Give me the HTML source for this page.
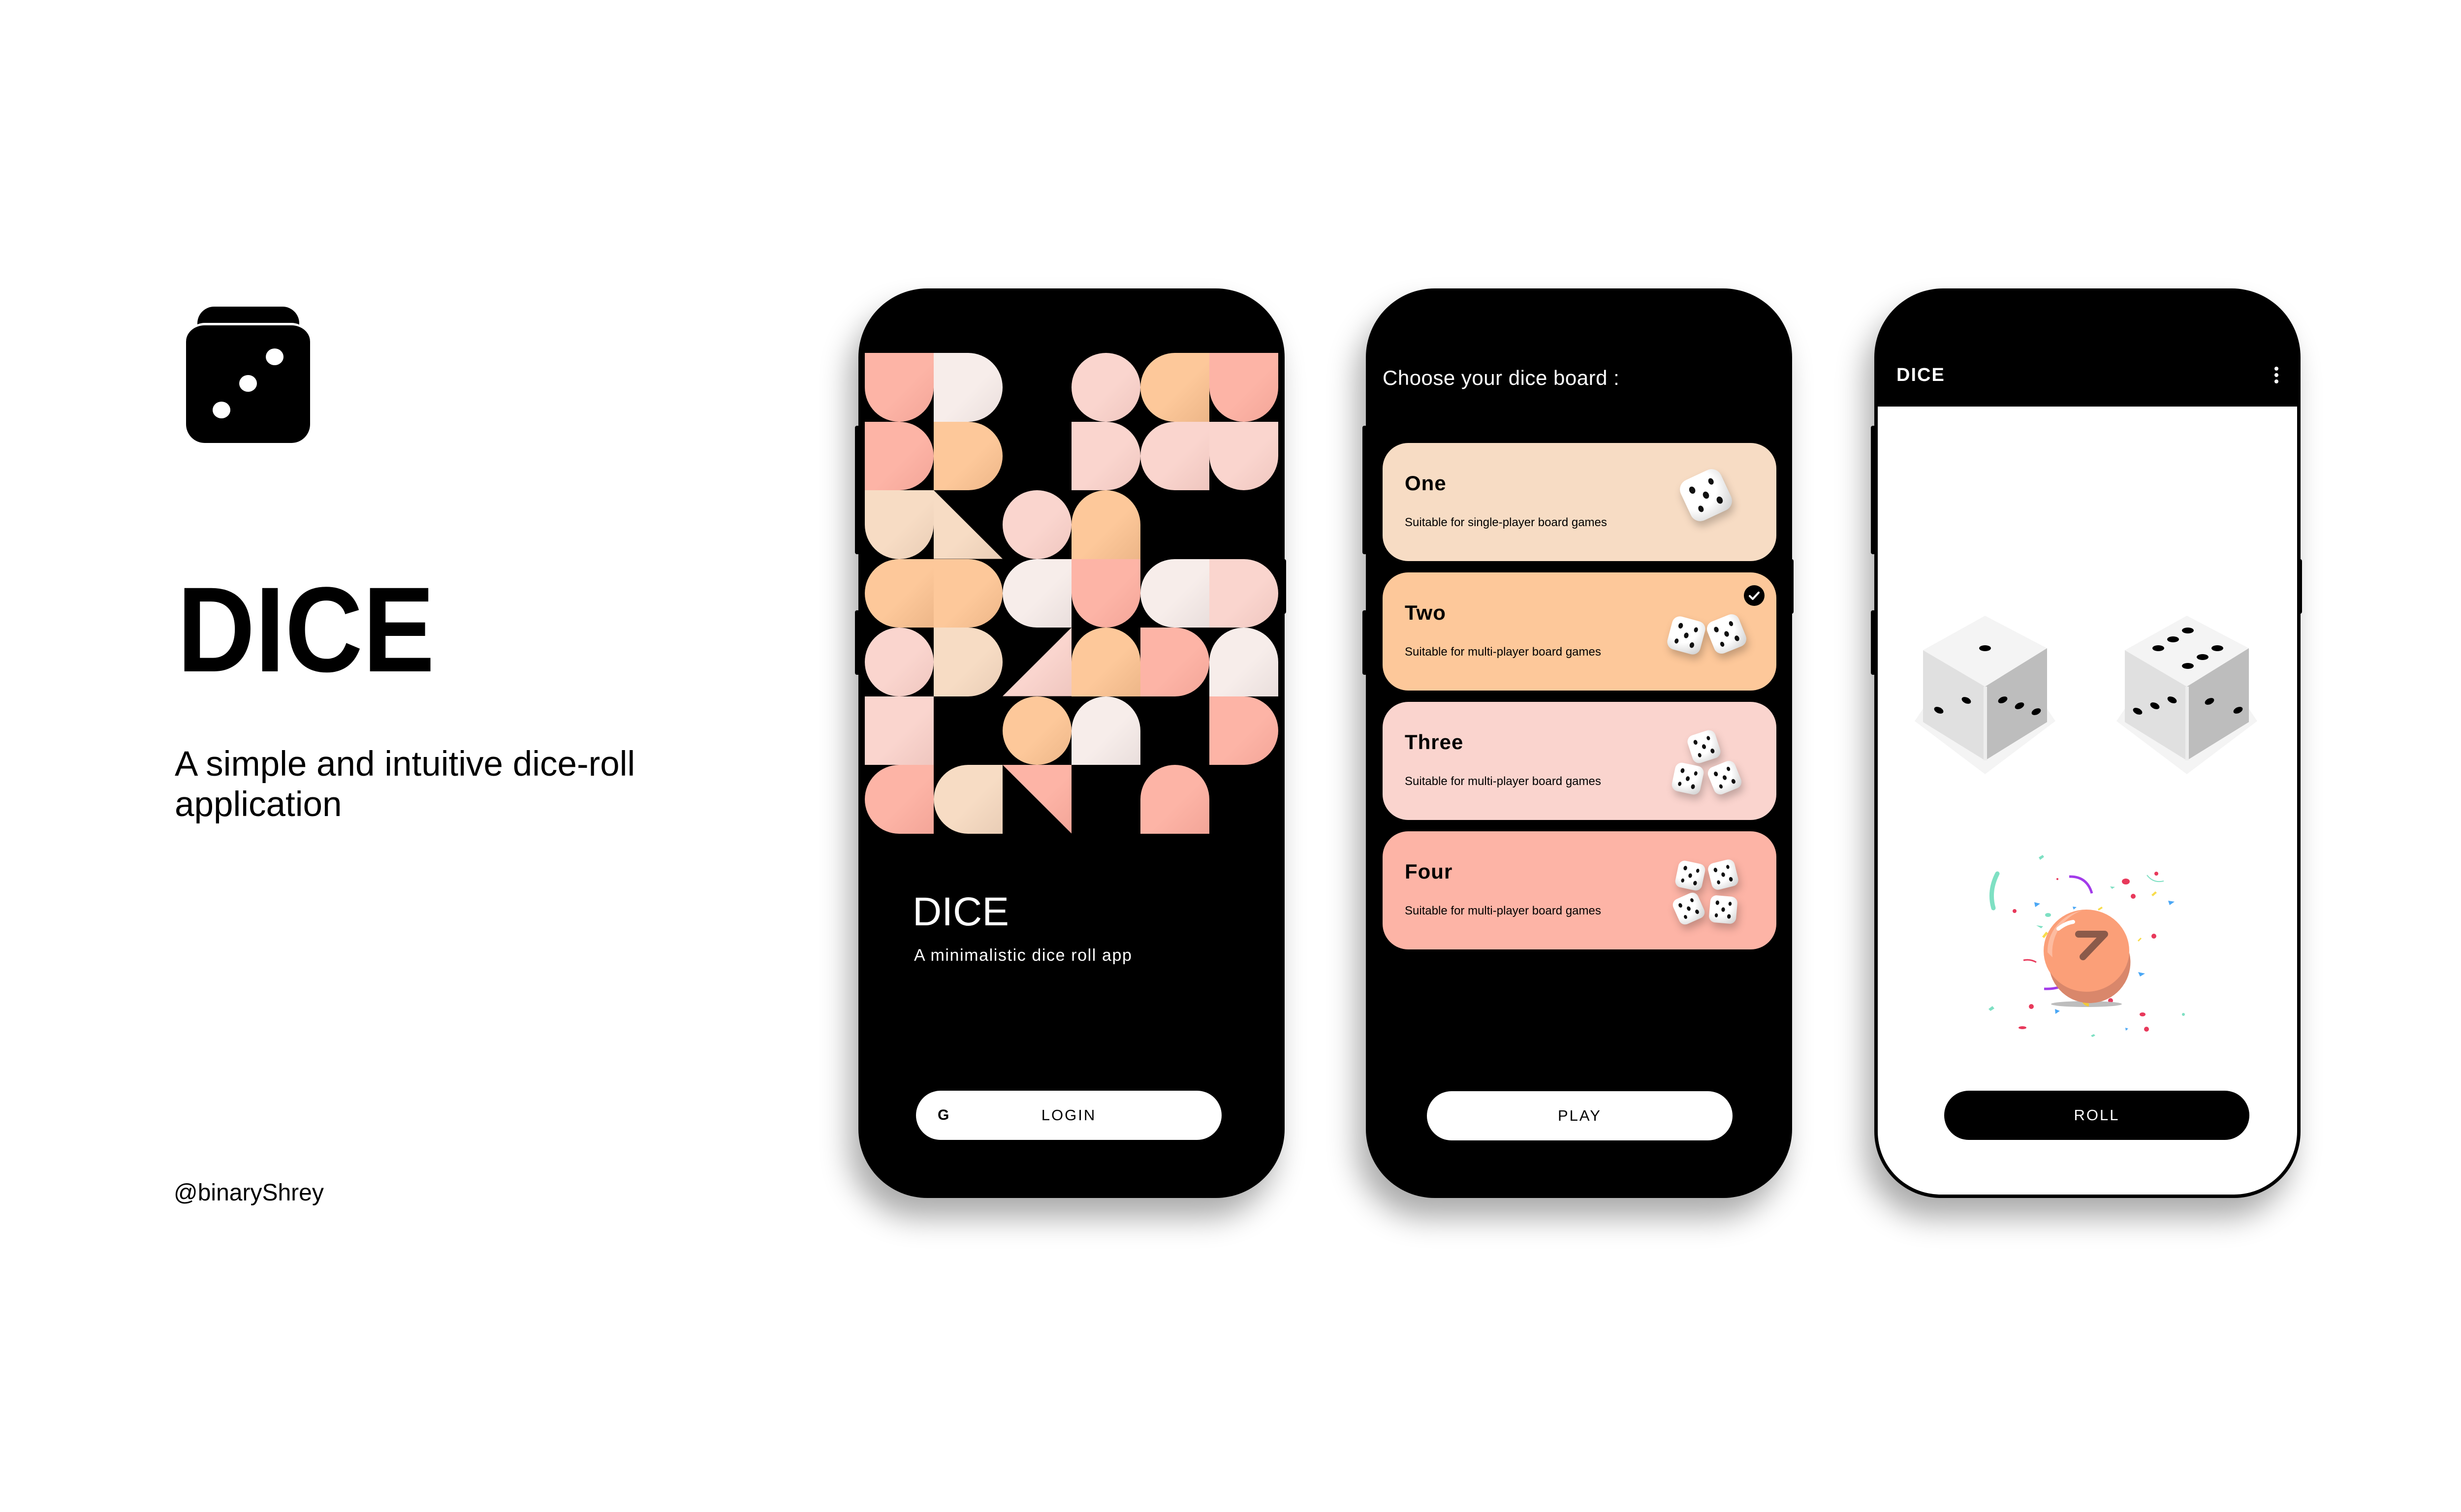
<!DOCTYPE html>
<html><head><meta charset="utf-8">
<style>
*{margin:0;padding:0;box-sizing:border-box}
body{width:5120px;height:3072px;background:#fff;position:relative;overflow:hidden;font-family:"Liberation Sans",sans-serif;color:#000}
.a{position:absolute}
.phone{position:absolute;top:586px;width:866px;height:1848px;background:#000;border-radius:140px;box-shadow:-18px 40px 60px rgba(0,0,0,0.33)}
.btn{position:absolute;background:#000;border-radius:4px;width:10px}
.grid div{position:absolute;width:140px;height:139.5px}
.S{background:linear-gradient(135deg,#FDB4A6 55%,#F3A598)}
.L{background:linear-gradient(135deg,#F7EDEA 55%,#E9DEDC)}
.P{background:linear-gradient(135deg,#FAD5CE 55%,#EFC6BF)}
.O{background:linear-gradient(135deg,#FDC89A 55%,#EDB688)}
.C{background:linear-gradient(135deg,#F7DCC4 55%,#E9CDB6)}
.ci{border-radius:50%}
.rb{border-radius:0 0 70px 70px}
.rt{border-radius:70px 70px 0 0}
.rl{border-radius:70px 0 0 70px}
.rr{border-radius:0 70px 70px 0}
.tA{clip-path:polygon(0 0,100% 100%,0 100%)}
.tB{clip-path:polygon(100% 0,100% 100%,0 100%)}
.tC{clip-path:polygon(0 0,100% 0,100% 100%)}
.card{position:absolute;left:34px;width:800px;height:240px;border-radius:52px}
.card h3{position:absolute;left:45px;top:58px;font-size:42px;font-weight:bold;letter-spacing:1px}
.card p{position:absolute;left:45px;top:148px;font-size:24px}
.pill{position:absolute;height:100px;border-radius:50px;text-align:center;line-height:100px;font-size:31px;letter-spacing:3px}
</style></head><body>

<!-- left branding -->
<div class="a" style="left:401px;top:623px;width:207px;height:40px;background:#000;border-radius:34px 34px 0 0"></div>
<div class="a" style="left:378px;top:656px;width:252px;height:244px;background:#000;border-radius:38px;border-top:5px solid #fff"></div>
<div class="a" style="left:540px;top:708px;width:36px;height:34px;border-radius:50%;background:#fff"></div>
<div class="a" style="left:486px;top:762px;width:36px;height:34px;border-radius:50%;background:#fff"></div>
<div class="a" style="left:432px;top:816px;width:36px;height:34px;border-radius:50%;background:#fff"></div>
<div class="a" style="left:360px;top:1150px;font-size:246px;font-weight:bold;line-height:260px;transform:scaleX(0.89);transform-origin:0 0">DICE</div>
<div class="a" style="left:355px;top:1512px;font-size:71px;line-height:82px">A simple and intuitive dice-roll<br>application</div>
<div class="a" style="left:353px;top:2396px;font-size:48px">@binaryShrey</div>

<!-- phone 1 -->
<div class="btn" style="left:1737px;top:865px;height:261px"></div>
<div class="btn" style="left:1737px;top:1240px;height:131px"></div>
<div class="btn" style="left:2603px;top:1136px;height:111px"></div>
<div class="phone" style="left:1744px">
  <div class="grid a" style="left:13px;top:131px">
    <div class="S rb" style="left:0;top:0"></div>
    <div class="L rr" style="left:140px;top:0"></div>
    <div class="P ci" style="left:420px;top:0"></div>
    <div class="O rl" style="left:560px;top:0"></div>
    <div class="S rb" style="left:700px;top:0"></div>

    <div class="S rr" style="left:0;top:139.5px"></div>
    <div class="O rr" style="left:140px;top:139.5px"></div>
    <div class="P rr" style="left:420px;top:139.5px"></div>
    <div class="P rl" style="left:560px;top:139.5px"></div>
    <div class="P rb" style="left:700px;top:139.5px"></div>

    <div class="C rb" style="left:0;top:279px"></div>
    <div class="C tA" style="left:140px;top:279px"></div>
    <div class="P ci" style="left:280px;top:279px"></div>
    <div class="O rt" style="left:420px;top:279px"></div>

    <div class="O rl" style="left:0;top:418.5px"></div>
    <div class="O rr" style="left:140px;top:418.5px"></div>
    <div class="L rl" style="left:280px;top:418.5px"></div>
    <div class="S rb" style="left:420px;top:418.5px"></div>
    <div class="L rl" style="left:560px;top:418.5px"></div>
    <div class="P rr" style="left:700px;top:418.5px"></div>

    <div class="P ci" style="left:0;top:558px"></div>
    <div class="C rr" style="left:140px;top:558px"></div>
    <div class="P tB" style="left:280px;top:558px"></div>
    <div class="O rt" style="left:420px;top:558px"></div>
    <div class="S rr" style="left:560px;top:558px"></div>
    <div class="L rt" style="left:700px;top:558px"></div>

    <div class="P" style="left:0;top:697.5px"></div>
    <div class="O ci" style="left:280px;top:697.5px"></div>
    <div class="L rt" style="left:420px;top:697.5px"></div>
    <div class="S rr" style="left:700px;top:697.5px"></div>

    <div class="S rl" style="left:0;top:837px"></div>
    <div class="C rl" style="left:140px;top:837px"></div>
    <div class="S tC" style="left:280px;top:837px"></div>
    <div class="S rt" style="left:560px;top:837px"></div>
  </div>
  <div class="a" style="left:110px;top:1222px;font-size:82px;color:#fff;line-height:90px">DICE</div>
  <div class="a" style="left:113px;top:1336px;font-size:34px;color:#fff;letter-spacing:1.6px">A minimalistic dice roll app</div>
  <div class="pill" style="left:117px;top:1630px;width:621px;background:#fff;color:#000">
    <span class="a" style="left:44px;top:0;font-weight:bold;font-size:30px;letter-spacing:0">G</span>LOGIN</div>
</div>

<svg width="0" height="0" style="position:absolute">
<defs>
<radialGradient id="dg" cx="0.35" cy="0.3" r="0.9"><stop offset="0.5" stop-color="#fff"/><stop offset="1" stop-color="#cfcfcf"/></radialGradient>
<g id="die">
<rect x="-30" y="-30" width="60" height="60" rx="14" fill="url(#dg)"/>
<ellipse cx="-14" cy="-14" rx="4" ry="5" fill="#111"/><ellipse cx="0" cy="0" rx="4" ry="5" fill="#111"/><ellipse cx="14" cy="14" rx="4" ry="5" fill="#111"/>
<ellipse cx="14" cy="-14" rx="3.5" ry="4.5" fill="#111"/><ellipse cx="-14" cy="14" rx="3.5" ry="4.5" fill="#111"/>
</g>
</defs>
</svg>

<!-- phone 2 -->
<div class="btn" style="left:2768px;top:865px;height:261px"></div>
<div class="btn" style="left:2768px;top:1240px;height:131px"></div>
<div class="btn" style="left:3634px;top:1136px;height:111px"></div>
<div class="phone" style="left:2775px">
  <div class="a" style="left:34px;top:158px;font-size:42px;color:#fff;letter-spacing:0.5px">Choose your dice board :</div>
  <div class="card" style="top:314px;background:#F7DCC4"><h3>One</h3><p>Suitable for single-player board games</p></div>
  <div class="card" style="top:577px;background:#FDC89A"><h3>Two</h3><p>Suitable for multi-player board games</p>
    <div class="a" style="left:734px;top:26px;width:42px;height:42px;border-radius:50%;background:#000"></div>
    <svg class="a" style="left:734px;top:26px" width="42" height="42"><path d="M12 22 L18 28 L30 15" stroke="#fff" stroke-width="4" fill="none" stroke-linecap="round" stroke-linejoin="round"/></svg>
  </div>
  <div class="card" style="top:840px;background:#FAD4CE"><h3>Three</h3><p>Suitable for multi-player board games</p></div>
  <div class="card" style="top:1103px;background:#FDB4A6"><h3>Four</h3><p>Suitable for multi-player board games</p></div>
  <div class="pill" style="left:124px;top:1631px;width:621px;background:#fff;color:#000">PLAY</div>
</div>
<svg class="a" style="left:0;top:0;filter:drop-shadow(4px 10px 8px rgba(0,0,0,0.22))" width="5120" height="3072">
<use href="#die" transform="translate(3466,1006) rotate(-25) scale(1.5)"/>
<use href="#die" transform="translate(3426,1291) rotate(15) scale(1.15)"/>
<use href="#die" transform="translate(3508,1288) rotate(-22) scale(1.15)"/>
<use href="#die" transform="translate(3462,1517) rotate(-18) scale(0.98)"/>
<use href="#die" transform="translate(3429,1582) rotate(12) scale(0.98)"/>
<use href="#die" transform="translate(3504,1580) rotate(-22) scale(0.98)"/>
<use href="#die" transform="translate(3434,1779) rotate(12) scale(0.92)"/>
<use href="#die" transform="translate(3501,1777) rotate(-14) scale(0.92)"/>
<use href="#die" transform="translate(3431,1846) rotate(-24) scale(0.92)"/>
<use href="#die" transform="translate(3501,1848) rotate(5) scale(0.92)"/>
</svg>

<!-- phone 3 -->
<div class="btn" style="left:3801px;top:865px;height:261px"></div>
<div class="btn" style="left:3801px;top:1240px;height:131px"></div>
<div class="btn" style="left:4667px;top:1136px;height:111px"></div>
<div class="phone" style="left:3808px;border-radius:140px 140px 135px 135px">
  <div class="a" style="left:45px;top:155px;font-size:38px;font-weight:bold;color:#fff;letter-spacing:2px">DICE</div>
  <div class="a" style="left:813px;top:159px;width:8px;height:8px;border-radius:50%;background:#fff"></div>
  <div class="a" style="left:813px;top:172px;width:8px;height:8px;border-radius:50%;background:#fff"></div>
  <div class="a" style="left:813px;top:185px;width:8px;height:8px;border-radius:50%;background:#fff"></div>
  <div class="a" style="left:7px;top:240px;width:852px;height:1601px;background:#fff;border-radius:0 0 128px 128px"></div>
  <div class="pill" style="left:142px;top:1630px;width:620px;background:#000;color:#fff">ROLL</div>
</div>
<svg class="a" style="left:0;top:0" width="5120" height="3072">
<defs>
<g id="box">
<path d="M10 225 L153 333 L296 225 L279 200 L153 290 L27 200 Z" fill="#F4F4F4"/>
<path d="M153 11 L27 81 L153 155 L279 77 Z" fill="#F4F4F4"/>
<path d="M27 81 L153 155 L153 305 L27 227 Z" fill="#E0E0E0"/>
<path d="M153 155 L279 77 L279 227 L153 305 Z" fill="#BDBDBD"/>
<path d="M150 155 L157 155 L157 305 L150 305Z" fill="#EDEDED"/>
</g>
</defs>
<g transform="translate(3880,1240)">
<use href="#box"/>
<ellipse cx="153" cy="77" rx="12" ry="6" fill="#000"/>
<ellipse cx="59" cy="203" rx="10" ry="6" transform="rotate(25 59 203)" fill="#000"/>
<ellipse cx="115" cy="183" rx="10" ry="6" transform="rotate(25 115 183)" fill="#000"/>
<ellipse cx="189" cy="182" rx="10" ry="6" transform="rotate(-25 189 182)" fill="#000"/>
<ellipse cx="223" cy="194" rx="10" ry="6" transform="rotate(-25 223 194)" fill="#000"/>
<ellipse cx="257" cy="206" rx="10" ry="6" transform="rotate(-25 257 206)" fill="#000"/>
</g>
<g transform="translate(4290,1240)">
<use href="#box"/>
<ellipse cx="155" cy="41" rx="12" ry="6" fill="#000"/>
<ellipse cx="125" cy="59" rx="12" ry="6" fill="#000"/>
<ellipse cx="95" cy="77" rx="12" ry="6" fill="#000"/>
<ellipse cx="155" cy="113" rx="12" ry="6" fill="#000"/>
<ellipse cx="185" cy="95" rx="12" ry="6" fill="#000"/>
<ellipse cx="215" cy="77" rx="12" ry="6" fill="#000"/>
<ellipse cx="53" cy="205" rx="10" ry="6" transform="rotate(25 53 205)" fill="#000"/>
<ellipse cx="88" cy="194" rx="10" ry="6" transform="rotate(25 88 194)" fill="#000"/>
<ellipse cx="123" cy="182" rx="10" ry="6" transform="rotate(25 123 182)" fill="#000"/>
<ellipse cx="199" cy="185" rx="10" ry="6" transform="rotate(-25 199 185)" fill="#000"/>
<ellipse cx="257" cy="203" rx="10" ry="6" transform="rotate(-25 257 203)" fill="#000"/>
</g>
<!-- confetti -->
<path d="M4058 1775 Q4040 1810 4050 1845" stroke="#7EE0C3" stroke-width="9" fill="none" stroke-linecap="round"/>
<path d="M4204 1781 Q4240 1780 4250 1815" stroke="#A23BEA" stroke-width="5" fill="none"/>
<path d="M4153 2009 Q4175 2010 4190 2003" stroke="#A23BEA" stroke-width="5" fill="none"/>
<path d="M4111 1951 Q4125 1948 4137 1955" stroke="#E8395B" stroke-width="3" fill="none"/>
<path d="M4362 1778 Q4375 1795 4396 1790" stroke="#7EE0C3" stroke-width="2" fill="none"/>
<g fill="#E8395B">
<ellipse cx="4319" cy="1791" rx="8" ry="6"/><circle cx="4334" cy="1821" r="5"/><circle cx="4381" cy="1775" r="4"/><circle cx="4376" cy="1902" r="5"/><circle cx="4093" cy="1851" r="4"/><circle cx="4127" cy="2045" r="5"/><ellipse cx="4109" cy="2088" rx="8" ry="3"/><ellipse cx="4353" cy="2061" rx="6" ry="4"/><circle cx="4361" cy="2091" r="5"/><circle cx="4288" cy="2033" r="5"/><circle cx="4180" cy="1786" r="2"/>
</g>
<g fill="#4AA7F5">
<path d="M4133 1833 l12 3 l-10 7z"/><path d="M4405 1830 l13 2 l-10 7z"/><path d="M4344 1975 l14 3 l-10 6z"/><path d="M4175 2050 l10 4 l-9 6z"/><path d="M4211 1842 l8 1 l-6 5z"/><path d="M4318 2088 l6 2 l-5 4z"/>
</g>
<g fill="#7EE0C3">
<path d="M4142 1742 l8 -5 l3 4 l-8 6z"/><ellipse cx="4161" cy="1859" rx="6" ry="4"/><path d="M4040 2050 l8 -6 l4 5 l-8 5z"/><path d="M4248 2104 l6 -3 l3 3 l-6 3z"/><circle cx="4436" cy="2061" r="3"/><path d="M4137 1880 l14 2 l-4 4z"/><path d="M4287 1801 l10 1 l-6 4z"/>
</g>
<g fill="#F8DC4B">
<path d="M4149 1903 l8 -10 l4 3 l-8 10z"/><path d="M4371 1818 l8 -7 l3 3 l-8 7z"/><path d="M4343 1911 l6 -6 l2 2 l-6 6z"/><path d="M4262 1847 l8 -5 l2 3 l-8 5z"/>
</g>
<ellipse cx="4239" cy="2040" rx="72" ry="6" fill="#BDBDBD"/>
<path d="M4229 2020 q2 20 15 22" stroke="#F0C93A" stroke-width="6" fill="none"/>
<ellipse cx="4239" cy="1932" rx="87" ry="84" fill="#FB9F78"/>
<path d="M4165 1975 A87 84 0 0 0 4326 1935 A80 80 0 0 1 4165 1975Z" fill="#D9876B"/>
<path d="M4160 1935 A87 84 0 0 1 4230 1850 A90 90 0 0 0 4170 1945Z" fill="#FDBBA0"/>
<path d="M4182 1887 q15 -12 30 -14" stroke="#fff" stroke-width="8" fill="none" stroke-linecap="round"/>
<path d="M4223 1898 L4276 1898 L4232 1944" stroke="#8B5A4A" stroke-width="14" fill="none" stroke-linecap="round" stroke-linejoin="round"/>
</svg>

</body></html>
